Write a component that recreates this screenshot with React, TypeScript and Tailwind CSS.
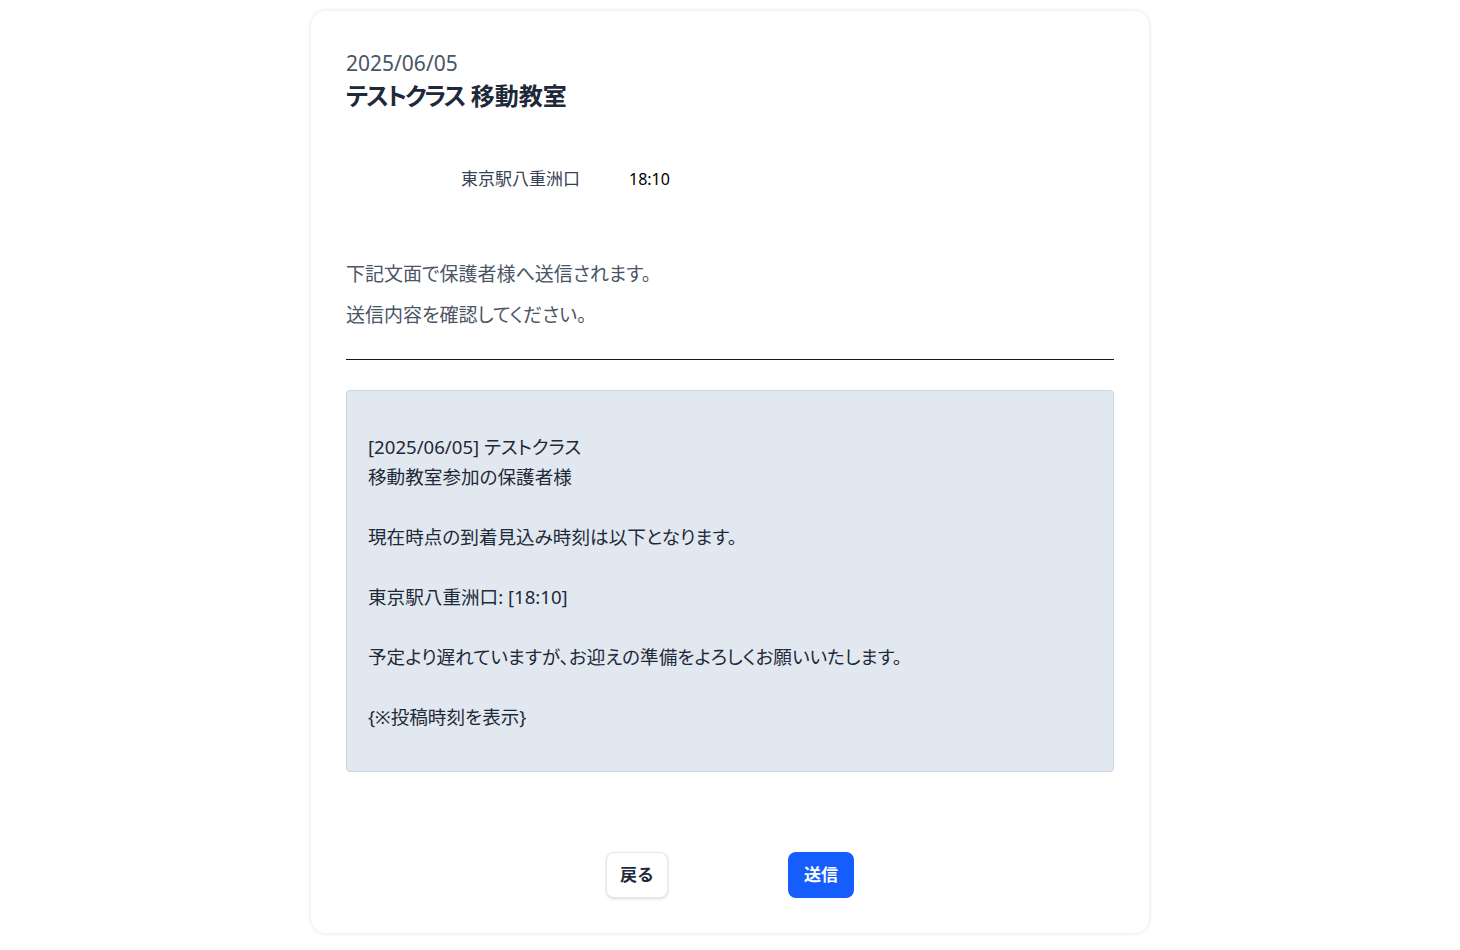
import React from "react";

const message = `
[2025/06/05] テストクラス
移動教室参加の保護者様

現在時点の到着見込み時刻は以下となります。

東京駅八重洲口: [18:10]

予定より遅れていますが、お迎えの準備をよろしくお願いいたします。

{※投稿時刻を表示}
`;

export default function App() {
  return (
    <div
      className="min-h-[950px] bg-white flex justify-center pt-[10px]"
      style={{ fontFamily: '"Noto Sans", "Noto Sans CJK JP", sans-serif' }}
    >
      <div className="w-[840px] h-[924px] rounded-2xl bg-white shadow-[0_0_4px_rgba(0,0,0,0.08)] border border-[#f3f4f6] px-[35px] pt-[37px] flex flex-col">
        <div className="text-[21px] leading-[30px] text-[#4a5565]">2025/06/05</div>
        <div className="text-[24px] leading-[36px] font-bold text-[#1e2939] [font-feature-settings:'palt']">
          <span className="tracking-[-2px]">テストクラス</span> 移動教室
        </div>
        <div className="flex items-center mt-[50px] pl-[115px] h-[30px] text-[16px] text-[#1e2939]">
          <span className="w-[168px] text-[17px] text-[#364153]">東京駅八重洲口</span>
          <span className="text-black">18:10</span>
        </div>
        <div className="mt-[65px] text-[19px] text-[#4a5565] [font-feature-settings:'palt']">
          <p className="leading-[30px]">下記文面で保護者様へ送信されます。</p>
          <p className="leading-[30px] mt-[11px]">送信内容を確認してください。</p>
        </div>
        <div className="mt-[29px] h-px bg-[#111827]" />
        <div className="mt-[30px] h-[382px] rounded bg-[#e2e8f0] border border-[#cbd5e1] px-[21px] pt-[11px] text-[18.6px] leading-[30px] text-[#1e2939] whitespace-pre-wrap [font-feature-settings:'palt']">
          {message}
        </div>
        <div className="mt-[80px] flex justify-center gap-[120px]">
          <button className="h-[46px] px-[13px] rounded-lg bg-white border border-[#e5e7eb] shadow-[0_1px_3px_rgba(0,0,0,0.15)] text-[17px] font-bold text-[#1e2939]">
            戻る
          </button>
          <button className="h-[46px] px-[16px] rounded-lg bg-[#155dfc] text-[17px] font-bold text-white">
            送信
          </button>
        </div>
      </div>
    </div>
  );
}
